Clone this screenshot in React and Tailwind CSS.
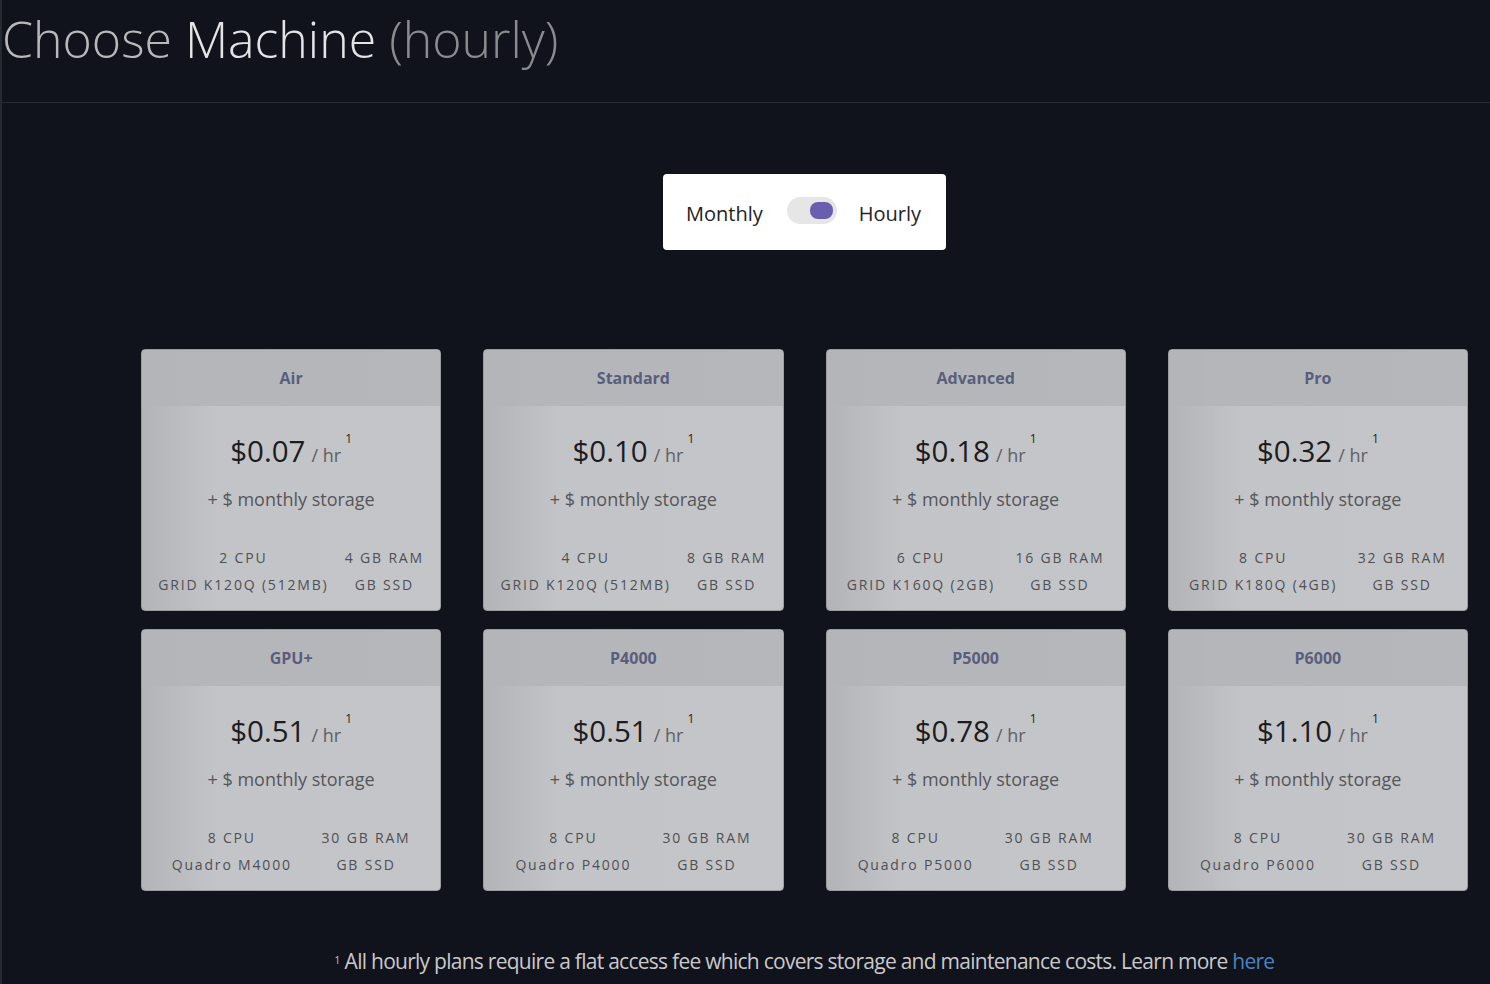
import React from "react"

const plans = [
    { name: "Air", price: "$0.07", cpu: "2 CPU", ram: "4 GB RAM", gpu: "GRID K120Q (512MB)" },
    { name: "Standard", price: "$0.10", cpu: "4 CPU", ram: "8 GB RAM", gpu: "GRID K120Q (512MB)" },
    { name: "Advanced", price: "$0.18", cpu: "6 CPU", ram: "16 GB RAM", gpu: "GRID K160Q (2GB)" },
    { name: "Pro", price: "$0.32", cpu: "8 CPU", ram: "32 GB RAM", gpu: "GRID K180Q (4GB)" },
    { name: "GPU+", price: "$0.51", cpu: "8 CPU", ram: "30 GB RAM", gpu: "Quadro M4000" },
    { name: "P4000", price: "$0.51", cpu: "8 CPU", ram: "30 GB RAM", gpu: "Quadro P4000" },
    { name: "P5000", price: "$0.78", cpu: "8 CPU", ram: "30 GB RAM", gpu: "Quadro P5000" },
    { name: "P6000", price: "$1.10", cpu: "8 CPU", ram: "30 GB RAM", gpu: "Quadro P6000" },
]

function PlanCard({ plan }) {
    return (
        <div className="h-[262px] rounded-[4px] border border-[#9a9ca1] overflow-hidden flex flex-col bg-gradient-to-r from-[#b3b4b8] via-[#c3c4c7] via-25% to-[#c4c5c8]">
            <div className="h-[56px] shrink-0 flex items-center justify-center bg-[#b4b5b8]/90 text-[16px] font-bold text-[#5a5e7c]">
                {plan.name}
            </div>
            <div className="flex flex-col items-center pt-[30px]">
                <div className="flex items-baseline text-[#1c1c1e]">
                    <span className="text-[29.5px] leading-none">{plan.price}</span>
                    <span className="ml-[6px] text-[18px] leading-none text-[#5f6064]">/ hr</span>
                    <span className="ml-[4px] self-start -mt-[3px] text-[12px] leading-none">1</span>
                </div>
                <div className="mt-[20px] text-[18px] text-[#55565a]">+ $ monthly storage</div>
            </div>
            <div className="mt-[31px] flex justify-evenly text-[14px] tracking-[0.13em] text-[#4f5054] leading-[27px]">
                <div className="text-center">
                    <div>{plan.cpu}</div>
                    <div>{plan.gpu}</div>
                </div>
                <div className="text-center">
                    <div>{plan.ram}</div>
                    <div>GB SSD</div>
                </div>
            </div>
        </div>
    )
}

export default function App() {
    return (
        <div className="min-h-[984px] bg-[#10131b] font-['Open_Sans',sans-serif] border-l-2 border-[#252933]">
            <div className="h-[103px] border-b border-[#262a33] flex items-start">
                <h1 className="mt-[8px] text-[50px] font-light leading-[62px]">
                    <span className="text-[#b9b9bc]">Choose </span>
                    <span className="text-[#e4e4e6]">Machine </span>
                    <span className="text-[#8b8b8f]">(hourly)</span>
                </h1>
            </div>

            <div className="ml-[139px] w-[1327px] flex flex-col items-center">
                <div className="mt-[71px] w-[283px] h-[76px] bg-white rounded-[4px] flex items-center justify-center pt-[4px] text-[20px] text-[#232325]">
                    <span className="-ml-[2px]">Monthly</span>
                    <div className="ml-[24px] w-[50px] h-[27px] -mt-[8px] rounded-full bg-[#e6e6e7] flex items-center justify-end pr-[4px]">
                        <div className="w-[23px] h-[17px] rounded-[8px] bg-[#6a5eae]" />
                    </div>
                    <span className="ml-[22px]">Hourly</span>
                </div>

                <div className="mt-[99px] w-full grid grid-cols-4 gap-x-[42px] gap-y-[18px]">
                    {plans.map((p) => (
                        <PlanCard key={p.name} plan={p} />
                    ))}
                </div>

                <p className="mt-[55px] text-[21px] tracking-[-0.035em] text-[#c9c9cc]">
                    <sup className="text-[10px] mr-[5px]">1</sup>
                    All hourly plans require a flat access fee which covers storage and maintenance costs. Learn more{" "}
                    <a className="text-[#4a83bf]">here</a>
                </p>
            </div>
        </div>
    )
}
